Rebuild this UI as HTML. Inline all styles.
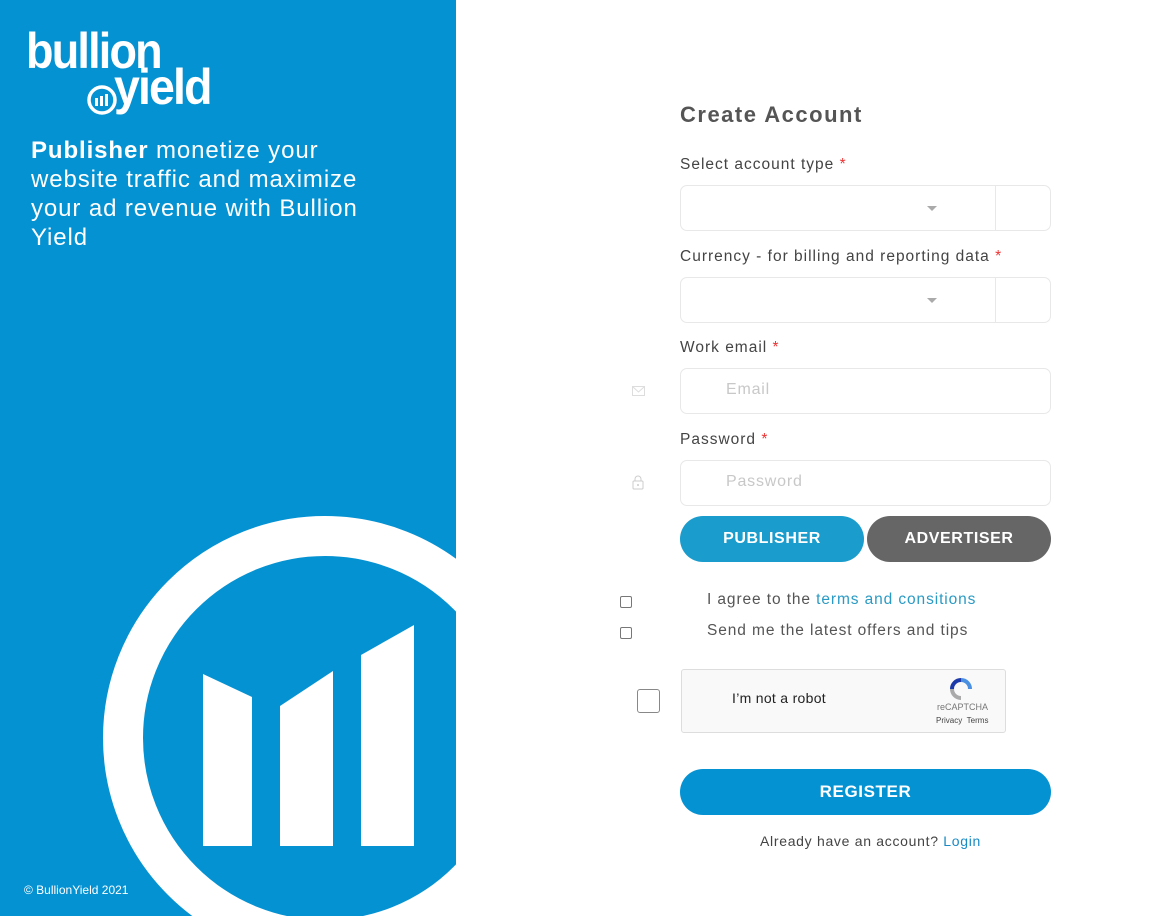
<!DOCTYPE html>
<html><head><meta charset="utf-8">
<style>
*{box-sizing:border-box;margin:0;padding:0}
body{width:1172px;height:916px;overflow:hidden;background:#fff;font-family:"Liberation Sans",sans-serif;position:relative}
.left{position:absolute;left:0;top:0;width:456px;height:916px;background:#0592d2;overflow:hidden}
.lg{position:absolute;color:#fff;font-weight:bold;letter-spacing:-2px;font-size:50px;line-height:50px;transform-origin:0 0}
.tag{position:absolute;left:31px;top:136px;width:420px;color:#fff;font-size:24px;line-height:29px;letter-spacing:0.9px}
.copy{position:absolute;left:24px;top:883px;color:#fff;font-size:12px}
.lbl{position:absolute;left:680px;font-size:15.5px;color:#444;letter-spacing:1px}
.lbl i{color:#e33;font-style:normal}
.box{position:absolute;left:680px;width:371px;height:46px;border:1.5px solid #e8e8e8;border-radius:7px;background:#fff}
.ph{position:absolute;left:45px;top:12px;font-size:16px;color:#c8c8c8;letter-spacing:0.8px}
.sel .div{position:absolute;right:54px;top:0;bottom:0;border-left:1.5px solid #e8e8e8}
.sel .ar{position:absolute;left:246px;top:20px;width:0;height:0;border-left:5px solid transparent;border-right:5px solid transparent;border-top:5px solid #aaa}
.btn{position:absolute;top:516px;height:46px;border-radius:23px;color:#fff;font-weight:bold;font-size:16px;text-align:center;line-height:46px;letter-spacing:0.6px}
.cb{position:absolute;left:620px;width:12px;height:12px;border:1px solid #777;border-radius:2px}
.ct{position:absolute;left:707px;font-size:15.5px;color:#555;letter-spacing:0.9px}
</style></head><body>
<div class="left">
<div class="lg" style="left:26px;top:26px;transform:scaleX(0.9)">bullion</div>
<div class="lg" style="left:114px;top:62px;transform:scaleX(0.93)">yield</div>
<svg style="position:absolute;left:86px;top:84px" width="34" height="34" viewBox="0 0 34 34"><circle cx="16" cy="16" r="13" fill="none" stroke="#fff" stroke-width="3.5"/><rect x="9" y="14" width="3" height="8" fill="#fff"/><rect x="14" y="12" width="3" height="10" fill="#fff"/><rect x="19" y="10" width="3" height="12" fill="#fff"/></svg>
<div class="tag"><b>Publisher</b> monetize your<br>website traffic and maximize<br>your ad revenue with Bullion<br>Yield</div>
<svg style="position:absolute;left:0;top:0" width="456" height="916">
<circle cx="325" cy="738" r="202" fill="none" stroke="#fff" stroke-width="40"/>
<polygon points="203,674 252,697 252,846 203,846" fill="#fff"/>
<polygon points="280,706 333,671 333,846 280,846" fill="#fff"/>
<polygon points="361,655 414,625 414,846 361,846" fill="#fff"/>
</svg>
<div class="copy">© BullionYield 2021</div>
</div>

<div style="position:absolute;left:680px;top:102px;font-size:22px;font-weight:bold;color:#555;letter-spacing:1.5px">Create Account</div>
<div class="lbl" style="top:156px">Select account type <i>*</i></div>
<div class="box sel" style="top:185px"><div class="ar"></div><div class="div"></div></div>
<div class="lbl" style="top:248px">Currency - for billing and reporting data <i>*</i></div>
<div class="box sel" style="top:277px"><div class="ar"></div><div class="div"></div></div>
<div class="lbl" style="top:339px">Work email <i>*</i></div>
<svg style="position:absolute;left:632px;top:386px" width="14" height="11"><rect x="0.5" y="0.5" width="12" height="9" fill="none" stroke="#ddd"/><path d="M1 1 L6.5 6 L12 1" fill="none" stroke="#ddd"/></svg>
<div class="box" style="top:368px"><div class="ph">Email</div></div>
<div class="lbl" style="top:431px">Password <i>*</i></div>
<svg style="position:absolute;left:632px;top:475px" width="12" height="15"><path d="M3 6V4a3 3 0 0 1 6 0v2" fill="none" stroke="#ccc"/><rect x="1" y="6" width="10" height="8" rx="1" fill="none" stroke="#ccc"/><circle cx="6" cy="10" r="1" fill="#ccc"/></svg>
<div class="box" style="top:460px"><div class="ph">Password</div></div>
<div class="btn" style="left:680px;width:184px;background:#1a9ccc">PUBLISHER</div>
<div class="btn" style="left:867px;width:184px;background:#666">ADVERTISER</div>
<div class="cb" style="top:596px"></div>
<div class="ct" style="top:591px">I agree to the <span style="color:#2a9ac4">terms and consitions</span></div>
<div class="cb" style="top:627px"></div>
<div class="ct" style="top:622px">Send me the latest offers and tips</div>
<div style="position:absolute;left:637px;top:689px;width:23px;height:24px;border:1.5px solid #888;border-radius:3px"></div>
<div style="position:absolute;left:681px;top:669px;width:325px;height:64px;border:1px solid #ddd;border-radius:3px;background:#f9f9f9">
<div style="position:absolute;left:50px;top:20px;font-size:14px;color:#222;letter-spacing:0.3px">I’m not a robot</div>
<svg style="position:absolute;left:266px;top:8px" width="26" height="22" viewBox="0 0 26 22"><path d="M4 11a9 9 0 0 0 9 9" fill="none" stroke="#aaa" stroke-width="4"/><path d="M13 2a9 9 0 0 0-9 9" fill="none" stroke="#1c3aa9" stroke-width="4"/><path d="M13 2a9 9 0 0 1 9 9" fill="none" stroke="#4a90e2" stroke-width="4"/></svg>
<div style="position:absolute;left:255px;top:32px;font-size:9px;color:#777">reCAPTCHA</div>
<div style="position:absolute;left:254px;top:46px;font-size:8px;color:#444">Privacy &nbsp;Terms</div>
</div>
<div class="btn" style="left:680px;top:769px;width:371px;background:#0592d2;font-size:17px">REGISTER</div>
<div style="position:absolute;left:760px;top:833px;font-size:14px;color:#444;letter-spacing:0.7px">Already have an account? <span style="color:#1a8ac4">Login</span></div>
</body></html>
